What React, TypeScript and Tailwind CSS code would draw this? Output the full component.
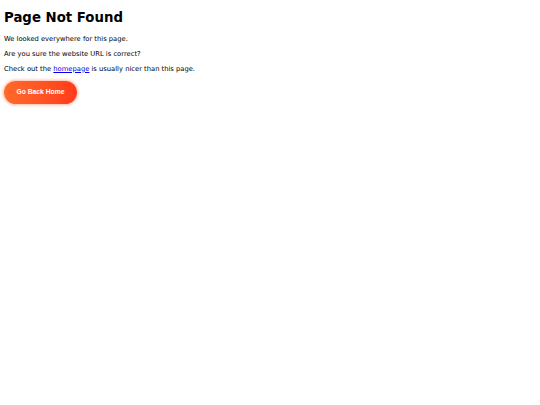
export default function App() {
  return (
    <div className="w-[540px] h-[405px] bg-white px-[4px] pt-[10px]" style={{ fontFamily: '"DejaVu Sans", sans-serif' }}>
      <h1 className="text-[13.3px] font-bold leading-[16px] text-black">Page Not Found</h1>
      <p className="mt-[5.5px] text-[6.75px] leading-[15px] text-black">We looked everywhere for this page.</p>
      <p className="text-[6.75px] leading-[15px] text-black">Are you sure the website URL is correct?</p>
      <p className="text-[6.75px] leading-[15px] text-black">
        Check out the <a href="#" className="text-[#0000ee] underline">homepage</a> is usually nicer than this page.
      </p>
      <button
        className="mt-[4px] h-[23px] w-[73px] rounded-full bg-gradient-to-r from-[#ff6a2b] to-[#ff3a1c] text-[6.75px] font-bold text-white shadow-[0_0_3px_1px_rgba(255,90,40,0.45)]"
        style={{ fontFamily: '"Liberation Sans", Arial, sans-serif' }}
      >
        Go Back Home
      </button>
    </div>
  );
}
